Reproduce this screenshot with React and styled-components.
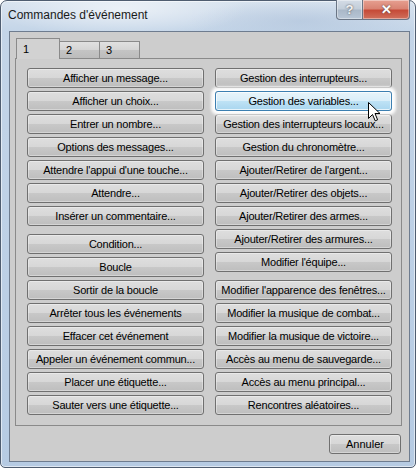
import React from "react";
import styled, { createGlobalStyle } from "styled-components";

const Global = createGlobalStyle`
  html, body { margin: 0; padding: 0; background: #ffffff; }
  body { font-family: "Liberation Sans", Arial, sans-serif; }
`;

const Window = styled.div`
  position: relative;
  width: 416px;
  height: 468px;
  box-sizing: border-box;
  padding: 30px 7px 7px 8px;
  border: 1px solid #4f5d70;
  border-radius: 7px 7px 5px 5px;
  background:
    radial-gradient(ellipse 180px 40px at 120px 8px, rgba(255,255,255,0.55), rgba(255,255,255,0) 70%),
    radial-gradient(ellipse 160px 30px at 300px 20px, rgba(170,190,215,0.5), rgba(170,190,215,0) 70%),
    linear-gradient(180deg, #d8e3ef 0px, #c4d5e8 30px, #b6cbe3 100%);
  box-shadow: inset 0 0 0 1px rgba(255,255,255,0.55);
`;

const TitleBar = styled.div`
  position: absolute;
  left: 0;
  right: 0;
  top: 0;
  height: 30px;
  display: flex;
  align-items: flex-start;
`;

const Title = styled.div`
  margin: 7px 0 0 7px;
  font-size: 12px;
  color: #1a1a1a;
  flex: 1;
`;

const CaptionButtons = styled.div`
  display: flex;
  margin-right: 5px;
  margin-top: -1px;
`;

const CapBtn = styled.div`
  width: ${(p) => p.$w}px;
  height: 20px;
  box-sizing: border-box;
  border: 1px solid #6a7585;
  border-top: none;
  display: flex;
  align-items: center;
  justify-content: center;
  font-weight: bold;
  font-size: 13px;
  color: ${(p) => (p.$close ? "#ffffff" : "#f2f2f2")};
  text-shadow: 0 0 2px #444;
  background: ${(p) =>
    p.$close
      ? "linear-gradient(180deg, #e6a091 0%, #d98474 45%, #c64b38 55%, #d0705c 100%)"
      : "linear-gradient(180deg, #d4dce6 0%, #c3ceda 45%, #aab8c8 55%, #b8c6d6 100%)"};
  border-radius: ${(p) => (p.$close ? "0 0 4px 0" : "0 0 0 4px")};
  border-left: ${(p) => (p.$close ? "none" : "1px solid #6a7585")};
  box-shadow: inset 0 0 0 1px rgba(255,255,255,0.4);
`;

const Client = styled.div`
  width: 401px;
  height: 431px;
  box-sizing: border-box;
  border: 1px solid #6e7c8f;
  background: #cdcdcd;
  padding: 6px 7px 6px 5px;
  display: flex;
  flex-direction: column;
`;

const Tabs = styled.div`
  display: flex;
  align-items: flex-end;
  height: 21px;
  padding-left: 1px;
  position: relative;
  z-index: 1;
`;

const Tab = styled.div`
  box-sizing: border-box;
  width: ${(p) => p.$w}px;
  height: ${(p) => (p.$active ? 21 : 18)}px;
  margin-left: ${(p) => (p.$first ? 0 : -1)}px;
  border: 1px solid #8a8a8a;
  border-bottom: ${(p) => (p.$active ? "none" : "1px solid #8a8a8a")};
  background: ${(p) =>
    p.$active ? "#d2d2d2" : "linear-gradient(180deg, #e0e0e0 0%, #d4d4d4 50%, #c4c4c4 51%, #bcbcbc 100%)"};
  font-size: 11px;
  color: #000;
  padding: ${(p) => (p.$active ? "4px 0 0 6px" : "2px 0 0 6px")};
  position: relative;
  z-index: ${(p) => (p.$active ? 2 : 1)};
`;

const Panel = styled.div`
  box-sizing: border-box;
  height: 368px;
  margin-top: -1px;
  border: 1px solid #8a8a8a;
  background: #cdcdcd;
  padding: 9px 9px 0 11px;
  display: flex;
  justify-content: space-between;
`;

const Column = styled.div`
  display: flex;
  flex-direction: column;
  gap: 8px;
  width: 177px;
`;

const Group = styled.div`
  display: flex;
  flex-direction: column;
  gap: 3px;
`;

const CmdButton = styled.div`
  box-sizing: border-box;
  height: 20px;
  border: 1px solid ${(p) => (p.$hover ? "#3c7fb1" : "#707070")};
  border-radius: 3px;
  display: flex;
  align-items: center;
  justify-content: center;
  font-size: 11px;
  letter-spacing: -0.2px;
  color: #000;
  white-space: nowrap;
  background: ${(p) =>
    p.$hover
      ? "linear-gradient(180deg, #e8f4fa 0%, #d9eef9 50%, #bfe2f5 51%, #a9d6ef 100%)"
      : "linear-gradient(180deg, #dedede 0%, #d7d7d7 50%, #c8c8c8 51%, #bebebe 100%)"};
  box-shadow: ${(p) =>
    p.$hover
      ? "inset 0 0 0 1px rgba(255,255,255,0.7), 0 0 3px 4px rgba(255,255,255,0.95)"
      : "inset 0 0 0 1px rgba(255,255,255,0.35)"};
  position: relative;
  z-index: ${(p) => (p.$hover ? 1 : 0)};
`;

const Footer = styled.div`
  flex: 1;
  display: flex;
  justify-content: flex-end;
  align-items: flex-end;
  padding-right: 1px;
`;

const CancelButton = styled(CmdButton)`
  width: 72px;
  margin-bottom: 1px;
  letter-spacing: 0;
`;

const Cursor = styled.svg`
  position: absolute;
  left: 367px;
  top: 101px;
  z-index: 5;
`;

const left = [
  [
    "Afficher un message...",
    "Afficher un choix...",
    "Entrer un nombre...",
    "Options des messages...",
    "Attendre l'appui d'une touche...",
    "Attendre...",
    "Insérer un commentaire...",
  ],
  [
    "Condition...",
    "Boucle",
    "Sortir de la boucle",
    "Arrêter tous les événements",
    "Effacer cet événement",
    "Appeler un événement commun...",
    "Placer une étiquette...",
    "Sauter vers une étiquette...",
  ],
];

const right = [
  [
    "Gestion des interrupteurs...",
    "Gestion des variables...",
    "Gestion des interrupteurs locaux...",
    "Gestion du chronomètre...",
    "Ajouter/Retirer de l'argent...",
    "Ajouter/Retirer des objets...",
    "Ajouter/Retirer des armes...",
    "Ajouter/Retirer des armures...",
    "Modifier l'équipe...",
  ],
  [
    "Modifier l'apparence des fenêtres...",
    "Modifier la musique de combat...",
    "Modifier la musique de victoire...",
    "Accès au menu de sauvegarde...",
    "Accès au menu principal...",
    "Rencontres aléatoires...",
  ],
];

function Col({ groups }) {
  return (
    <Column>
      {groups.map((g, i) => (
        <Group key={i}>
          {g.map((t) => (
            <CmdButton key={t} $hover={t === "Gestion des variables..."}>
              {t}
            </CmdButton>
          ))}
        </Group>
      ))}
    </Column>
  );
}

export default function App() {
  return (
    <>
      <Global />
      <Window>
        <TitleBar>
          <Title>Commandes d'événement</Title>
          <CaptionButtons>
            <CapBtn $w={27}>?</CapBtn>
            <CapBtn $w={47} $close>
              ✕
            </CapBtn>
          </CaptionButtons>
        </TitleBar>
        <Client>
          <Tabs>
            <Tab $w={44} $active $first>
              1
            </Tab>
            <Tab $w={41}>2</Tab>
            <Tab $w={41}>3</Tab>
          </Tabs>
          <Panel>
            <Col groups={left} />
            <Col groups={right} />
          </Panel>
          <Footer>
            <CancelButton>Annuler</CancelButton>
          </Footer>
        </Client>
        <Cursor width="13" height="21" viewBox="0 0 13 21">
          <path
            d="M0.5 0.5 L0.5 16.5 L4.5 12.5 L7.2 18.8 L9.6 17.8 L7 11.5 L12 11.5 Z"
            fill="#ffffff"
            stroke="#000000"
            strokeWidth="1"
            strokeLinejoin="miter"
          />
        </Cursor>
      </Window>
    </>
  );
}
